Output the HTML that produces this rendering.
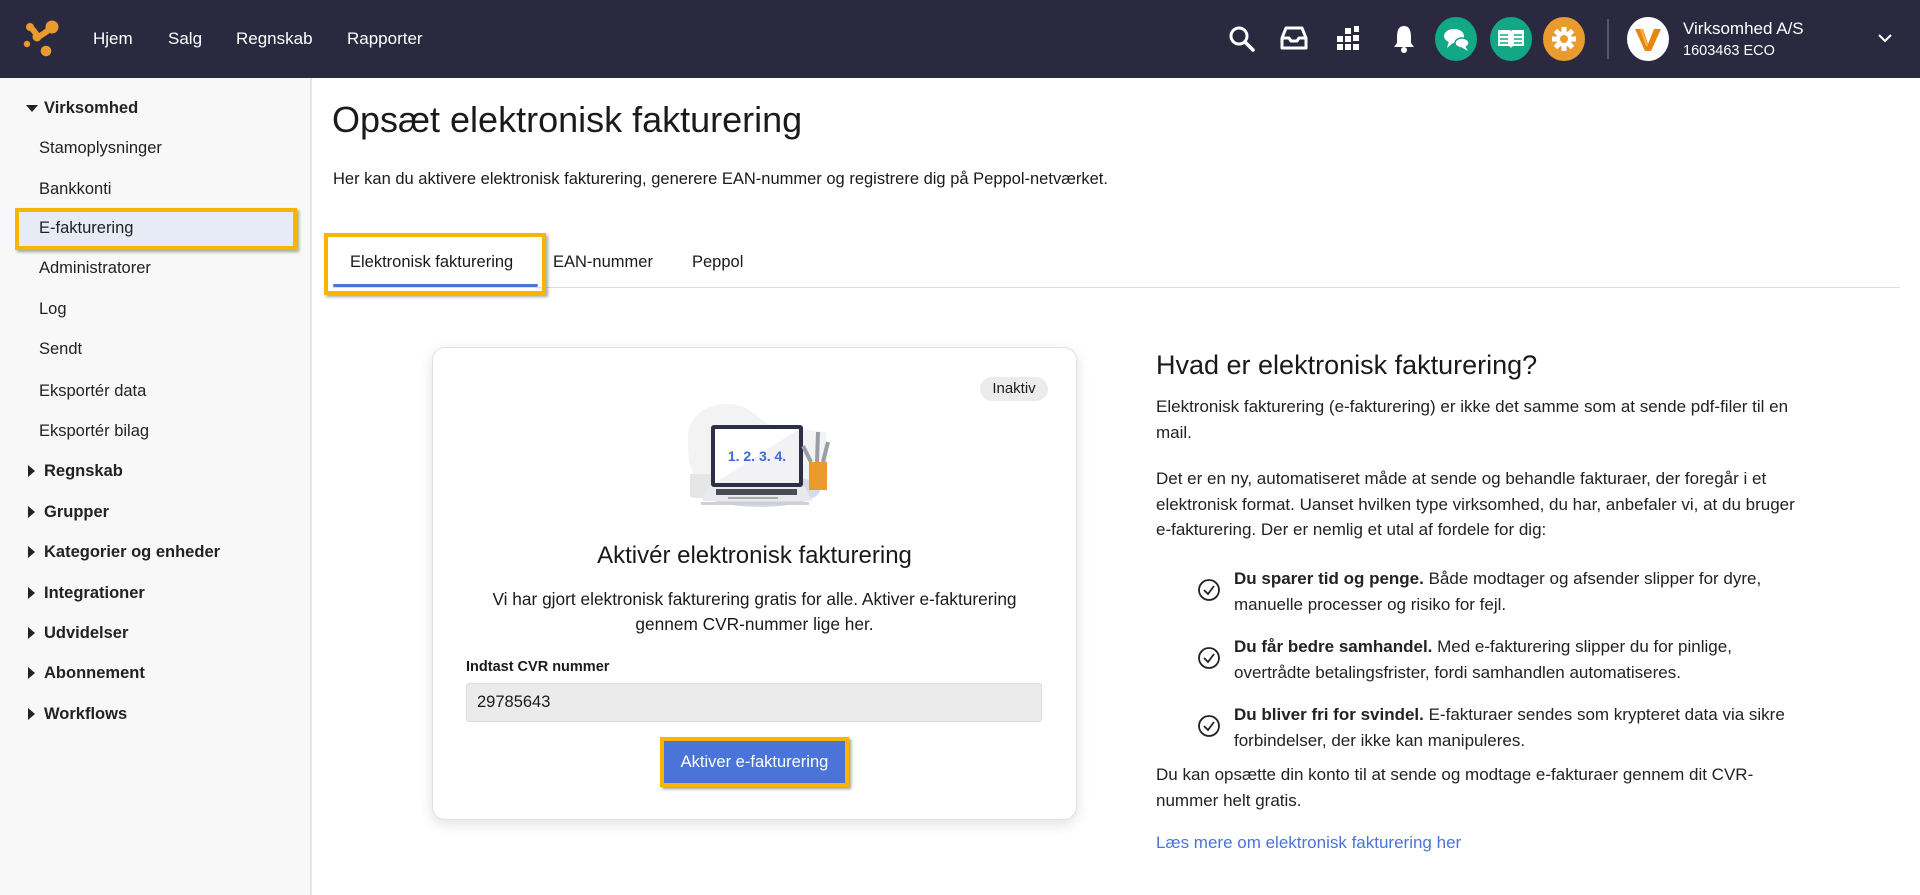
<!DOCTYPE html>
<html><head><meta charset="utf-8"><style>
*{box-sizing:border-box;margin:0;padding:0}
body{width:1920px;height:895px;overflow:hidden;background:#fff;font-family:"Liberation Sans",Arial,sans-serif;color:#1a1a1a;position:relative}
.abs{position:absolute}
.hdr{left:0;top:0;width:1920px;height:78px;background:#2a2940}
.nav{color:#fff;font-size:17px;top:29px}
.side{left:0;top:78px;width:312px;height:817px;background:#f8f8f8;border-right:2px solid #e6e6e6}
.si{position:absolute;left:39px;font-size:16.5px;color:#222}
.sg{position:absolute;left:44px;font-size:16.5px;font-weight:bold;color:#222}
.tri{position:absolute;left:28px;width:0;height:0}
.tr{border-top:6px solid transparent;border-bottom:6px solid transparent;border-left:7px solid #222}
.td{border-left:6px solid transparent;border-right:6px solid transparent;border-top:7px solid #222}
.rt{font-family:"Liberation Sans",Arial,sans-serif;font-size:17px;line-height:25.5px;color:#222;white-space:nowrap}
.ck{position:absolute;left:1197px;width:24px;height:24px}
</style></head><body>
<div class="abs hdr"></div>
<svg class="abs" style="left:0;top:0" width="80" height="78" viewBox="0 0 80 78">
<path d="M30 27 Q34 30 38 37 Q44 34 51 28" stroke="#e99b2e" stroke-width="6" fill="none" stroke-linecap="round"/>
<circle cx="30" cy="27" r="4" fill="#e99b2e"/><circle cx="52" cy="27" r="6.5" fill="#e99b2e"/><circle cx="37" cy="37" r="4.5" fill="#e99b2e"/><circle cx="27" cy="44" r="3.2" fill="#e99b2e"/><circle cx="46" cy="51" r="5.3" fill="#e99b2e"/></svg>
<div class="abs nav" style="left:93px">Hjem</div>
<div class="abs nav" style="left:168px">Salg</div>
<div class="abs nav" style="left:236px">Regnskab</div>
<div class="abs nav" style="left:347px">Rapporter</div>
<svg class="abs" style="left:1228px;top:25px" width="28" height="28" viewBox="0 0 28 28"><circle cx="11" cy="11" r="8" stroke="#fff" stroke-width="3" fill="none"/><path d="M17 17 L25 25" stroke="#fff" stroke-width="3.5" stroke-linecap="round"/></svg>
<svg class="abs" style="left:1280px;top:26px" width="28" height="24" viewBox="0 0 28 24"><path d="M2 12 L6 2 H22 L26 12 V22 H2 Z M2 12 H9 L11 15 H17 L19 12 H26" stroke="#fff" stroke-width="3" fill="none" stroke-linejoin="round"/></svg>
<svg class="abs" style="left:1337px;top:26px" width="24" height="26" viewBox="0 0 24 26"><g fill="#fff"><rect x="0" y="18" width="6" height="6"/><rect x="8" y="18" width="6" height="6"/><rect x="16" y="18" width="6" height="6"/><rect x="0" y="10" width="6" height="6"/><rect x="8" y="10" width="6" height="6"/><rect x="8" y="2" width="6" height="6"/><rect x="17" y="0" width="5" height="6"/><rect x="16" y="9" width="6" height="6"/></g></svg>
<svg class="abs" style="left:1392px;top:24px" width="24" height="30" viewBox="0 0 24 30"><path d="M12 2 C6 2 5 8 5 13 V19 L2 23 H22 L19 19 V13 C19 8 18 2 12 2Z" fill="#fff"/><circle cx="12" cy="26" r="3" fill="#fff"/></svg>
<div class="abs" style="left:1435px;top:17px;width:42px;height:44px;border-radius:50%;background:#12a886"></div>
<svg class="abs" style="left:1443px;top:27px" width="28" height="26" viewBox="0 0 28 26"><ellipse cx="11" cy="9" rx="10" ry="7" fill="#fff"/><path d="M6 14 L4 21 L11 15Z" fill="#fff"/><ellipse cx="19" cy="16" rx="7" ry="5" fill="#fff" stroke="#12a886" stroke-width="1.5"/><path d="M22 19 L25 24 L18 20Z" fill="#fff"/></svg>
<div class="abs" style="left:1490px;top:17px;width:42px;height:44px;border-radius:50%;background:#12a886"></div>
<svg class="abs" style="left:1497px;top:29px" width="28" height="20" viewBox="0 0 28 20"><path d="M1 1 H12 Q14 1 14 3 V19 Q13 17 11 17 H1Z M27 1 H16 Q14 1 14 3 V19 Q15 17 17 17 H27Z" fill="#fff"/><path d="M3 6 H11 M3 10 H11 M3 14 H11 M17 6 H25 M17 10 H25 M17 14 H25" stroke="#12a886" stroke-width="1.6"/></svg>
<div class="abs" style="left:1543px;top:17px;width:42px;height:44px;border-radius:50%;background:#e99b2e"></div>
<svg class="abs" style="left:1551px;top:26px" width="26" height="26" viewBox="0 0 26 26"><g fill="#fff"><circle cx="13" cy="13" r="8"/><g stroke="#fff" stroke-width="5"><path d="M13 1 V25 M1 13 H25 M4.5 4.5 L21.5 21.5 M21.5 4.5 L4.5 21.5"/></g></g><circle cx="13" cy="13" r="4" fill="#e99b2e"/></svg>
<div class="abs" style="left:1607px;top:19px;width:2px;height:40px;background:#55546a"></div>
<div class="abs" style="left:1627px;top:17px;width:42px;height:44px;border-radius:50%;background:#fff"></div>
<svg class="abs" style="left:1633px;top:26px" width="30" height="26" viewBox="0 0 30 26"><path d="M2 3 H10 L15 18 L21 3 H28 L18 25 H12Z" fill="#e9860c"/><path d="M8 3 L14 20" stroke="#f7b84a" stroke-width="2"/></svg>
<div class="abs" style="left:1683px;top:19px;color:#fff;font-size:17px">Virksomhed A/S</div>
<div class="abs" style="left:1683px;top:43px;color:#fff;font-size:14.5px">1603463 ECO</div>
<svg class="abs" style="left:1877px;top:32px" width="16" height="12" viewBox="0 0 16 12"><path d="M2 3 L8 9 L14 3" stroke="#fff" stroke-width="2" fill="none"/></svg>

<div class="abs side"></div>
<div class="tri td" style="top:105px;left:26px"></div><div class="sg" style="top:99px">Virksomhed</div>
<div class="si" style="top:139px">Stamoplysninger</div>
<div class="si" style="top:180px">Bankkonti</div>
<div class="abs" style="left:15px;top:208px;width:282px;height:42px;background:#e7ebf5;border:4px solid #f7b500;box-shadow:2px 2px 3px rgba(0,0,0,.35)"></div>
<div class="si" style="top:219px">E-fakturering</div>
<div class="si" style="top:259px">Administratorer</div>
<div class="si" style="top:300px">Log</div>
<div class="si" style="top:340px">Sendt</div>
<div class="si" style="top:382px">Eksportér data</div>
<div class="si" style="top:422px">Eksportér bilag</div>
<div class="tri tr" style="top:465px"></div><div class="sg" style="top:462px">Regnskab</div>
<div class="tri tr" style="top:506px"></div><div class="sg" style="top:503px">Grupper</div>
<div class="tri tr" style="top:546px"></div><div class="sg" style="top:543px">Kategorier og enheder</div>
<div class="tri tr" style="top:587px"></div><div class="sg" style="top:584px">Integrationer</div>
<div class="tri tr" style="top:627px"></div><div class="sg" style="top:624px">Udvidelser</div>
<div class="tri tr" style="top:667px"></div><div class="sg" style="top:664px">Abonnement</div>
<div class="tri tr" style="top:708px"></div><div class="sg" style="top:705px">Workflows</div>

<div class="abs" style="left:332px;top:99px;font-size:36px;color:#1a1a1a">Opsæt elektronisk fakturering</div>
<div class="abs" style="left:333px;top:170px;font-size:16.5px">Her kan du aktivere elektronisk fakturering, generere EAN-nummer og registrere dig på Peppol-netværket.</div>
<div class="abs" style="left:333px;top:287px;width:1567px;height:1px;background:#ddd"></div>
<div class="abs" style="left:324px;top:233px;width:222px;height:62px;border:4px solid #f7b500;box-shadow:2px 2px 3px rgba(0,0,0,.35)"></div>
<div class="abs" style="left:333px;top:284px;width:205px;height:3px;background:#4a74d8;border-radius:2px"></div>
<div class="abs" style="left:350px;top:253px;font-size:16.5px">Elektronisk fakturering</div>
<div class="abs" style="left:553px;top:253px;font-size:16.5px">EAN-nummer</div>
<div class="abs" style="left:692px;top:253px;font-size:16.5px">Peppol</div>

<div class="abs" style="left:432px;top:347px;width:645px;height:473px;border:1px solid #e2e2e2;border-radius:13px;box-shadow:0 4px 14px rgba(0,0,0,.12);background:#fff"></div>
<div class="abs" style="left:980px;top:377px;width:68px;height:24px;border-radius:12px;background:#ececec;font-size:15px;text-align:center;line-height:24px">Inaktiv</div>
<svg class="abs" style="left:680px;top:402px" width="150" height="106" viewBox="0 0 150 106">
<path d="M8 40 C6 15 25 2 48 2 C70 2 78 18 92 24 L146 30 L148 78 C130 108 50 112 22 86 C10 72 8 58 8 40Z" fill="#f3f3f4"/>
<ellipse cx="80" cy="88" rx="60" ry="17" fill="#d8dae5"/>
<path d="M10 72 H32 V92 Q32 96 28 96 H14 Q10 96 10 92Z" fill="#e6e6e6"/>
<path d="M32 76 Q38 76 38 82 Q38 88 32 88" stroke="#d6d6d6" stroke-width="2.5" fill="none"/>
<rect x="31" y="23" width="92" height="62" rx="3" fill="#2d2f44"/>
<rect x="35" y="27" width="84" height="54" fill="#fff"/>
<path d="M35 81 L119 27 V81Z" fill="#f2f2f4"/>
<text x="77" y="59" text-anchor="middle" font-family="Liberation Sans" font-weight="bold" font-size="14" fill="#3a6bd6">1. 2. 3. 4.</text>
<path d="M29 85 H125 L132 99 H22Z" fill="#e9eaee"/>
<rect x="36" y="87" width="81" height="6" fill="#4a4b55"/>
<rect x="48" y="95" width="50" height="2" fill="#aaa"/>
<rect x="21" y="100" width="108" height="3" fill="#cfd0d5"/>
<rect x="129" y="60" width="18" height="28" fill="#e99b2e"/>
<path d="M131 60 L123 44 M137 60 L138 30 M143 60 L148 40" stroke="#9a9ca6" stroke-width="4"/>
</svg>
<div class="abs" style="left:432px;width:645px;top:542px;text-align:center;font-size:24px">Aktivér elektronisk fakturering</div>
<div class="abs" style="left:432px;width:645px;top:587px;text-align:center;font-size:17.3px;line-height:25px">Vi har gjort elektronisk fakturering gratis for alle. Aktiver e-fakturering<br>gennem CVR-nummer lige her.</div>
<div class="abs" style="left:466px;top:659px;font-size:14.5px;font-weight:bold">Indtast CVR nummer</div>
<div class="abs" style="left:466px;top:683px;width:576px;height:39px;background:#ebebeb;border:1px solid #ddd;border-radius:3px;font-size:16.5px;padding:9px 0 0 10px">29785643</div>
<div class="abs" style="left:660px;top:737px;width:189px;height:50px;border:4px solid #f7b500;box-shadow:2px 2px 3px rgba(0,0,0,.4);background:#4a74d8;color:#fff;font-size:16.5px;text-align:center;line-height:42px">Aktiver e-fakturering</div>

<div class="abs" style="left:1156px;top:350px;font-size:27px">Hvad er elektronisk fakturering?</div>
<div class="abs rt" style="left:1156px;top:394px">Elektronisk fakturering (e-fakturering) er ikke det samme som at sende pdf-filer til en<br>mail.</div>
<div class="abs rt" style="left:1156px;top:466px">Det er en ny, automatiseret måde at sende og behandle fakturaer, der foregår i et<br>elektronisk format. Uanset hvilken type virksomhed, du har, anbefaler vi, at du bruger<br>e-fakturering. Der er nemlig et utal af fordele for dig:</div>
<svg class="ck" style="top:578px" viewBox="0 0 24 24"><circle cx="12" cy="12" r="10" stroke="#222" stroke-width="1.8" fill="none"/><path d="M7 12 L11 16 L17 8" stroke="#222" stroke-width="1.8" fill="none"/></svg>
<div class="abs rt" style="left:1234px;top:566px"><b>Du sparer tid og penge.</b> Både modtager og afsender slipper for dyre,<br>manuelle processer og risiko for fejl.</div>
<svg class="ck" style="top:646px" viewBox="0 0 24 24"><circle cx="12" cy="12" r="10" stroke="#222" stroke-width="1.8" fill="none"/><path d="M7 12 L11 16 L17 8" stroke="#222" stroke-width="1.8" fill="none"/></svg>
<div class="abs rt" style="left:1234px;top:634px"><b>Du får bedre samhandel.</b> Med e-fakturering slipper du for pinlige,<br>overtrådte betalingsfrister, fordi samhandlen automatiseres.</div>
<svg class="ck" style="top:714px" viewBox="0 0 24 24"><circle cx="12" cy="12" r="10" stroke="#222" stroke-width="1.8" fill="none"/><path d="M7 12 L11 16 L17 8" stroke="#222" stroke-width="1.8" fill="none"/></svg>
<div class="abs rt" style="left:1234px;top:702px"><b>Du bliver fri for svindel.</b> E-fakturaer sendes som krypteret data via sikre<br>forbindelser, der ikke kan manipuleres.</div>
<div class="abs rt" style="left:1156px;top:762px">Du kan opsætte din konto til at sende og modtage e-fakturaer gennem dit CVR-<br>nummer helt gratis.</div>
<div class="abs rt" style="left:1156px;top:830px;color:#4a74d8">Læs mere om elektronisk fakturering her</div>
</body></html>
